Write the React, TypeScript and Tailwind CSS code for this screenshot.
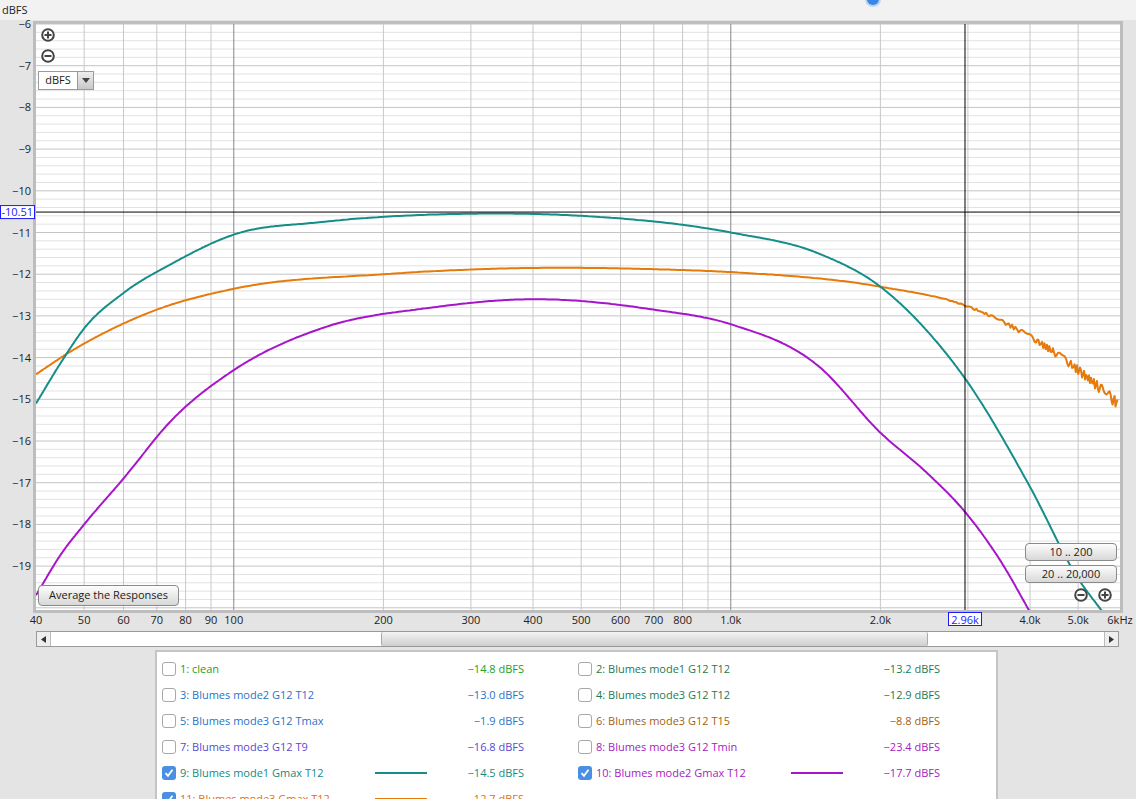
import React from "react";

// plot geometry
const L = 36;
const R = 1120;
const T = 24;
const B = 610;
const PX_PER_DEC = 497;
const PX_PER_DB = 41.7;

const fx = (f: number) => L + Math.log10(f / 40) * PX_PER_DEC;
const dy = (db: number) => T + (-6 - db) * PX_PER_DB;

type Pt = [number, number];

// cubic hermite through control points in log-f space (non-uniform tangents)
function curve(pts: Pt[], noise = (_f: number) => 0): string {
  const xs = pts.map((p) => Math.log10(p[0]));
  const ys = pts.map((p) => p[1]);
  const n = pts.length;
  const slope = (i: number) => (ys[i + 1] - ys[i]) / (xs[i + 1] - xs[i]);
  const m = xs.map((_, i) => {
    if (i === 0) return slope(0);
    if (i === n - 1) return slope(n - 2);
    const a = slope(i - 1);
    const b = slope(i);
    const ha = xs[i] - xs[i - 1];
    const hb = xs[i + 1] - xs[i];
    return (a * hb + b * ha) / (ha + hb);
  });
  const out: string[] = [];
  for (let i = 0; i < n - 1; i++) {
    const h = xs[i + 1] - xs[i];
    const steps = 40;
    for (let s = 0; s <= steps; s++) {
      const t = s / steps;
      const t2 = t * t;
      const t3 = t2 * t;
      const v =
        (2 * t3 - 3 * t2 + 1) * ys[i] +
        (t3 - 2 * t2 + t) * h * m[i] +
        (-2 * t3 + 3 * t2) * ys[i + 1] +
        (t3 - t2) * h * m[i + 1];
      const f = Math.pow(10, xs[i] + h * t);
      out.push(`${fx(f).toFixed(1)},${dy(v + noise(f)).toFixed(1)}`);
    }
  }
  return "M" + out.join(" L");
}

const teal = curve([
  [40, -15.1], [45, -14.1], [50, -13.3], [60, -12.45], [75, -11.75], [100, -11.05],
  [150, -10.75], [300, -10.55], [500, -10.6], [1000, -11.0], [1500, -11.5],
  [2000, -12.3], [2500, -13.4], [2960, -14.5], [4000, -17.1], [5000, -19.3], [5600, -20.1],
]);
const orange = curve(
  [
    [40, -14.4], [47, -13.85], [55, -13.4], [70, -12.85], [100, -12.35], [200, -12.0],
    [400, -11.85], [700, -11.88], [1000, -11.95], [2000, -12.3], [2960, -12.75],
    [4000, -13.5], [5000, -14.3], [6000, -15.1],
  ],
  (f) => (f > 2500 ? Math.sin(f * 1.7) * (f - 2500) / 25000 : 0)
);
const purple = curve([
  [40, -19.7], [45, -18.7], [50, -18.0], [60, -16.9], [75, -15.5], [100, -14.3],
  [150, -13.3], [250, -12.8], [400, -12.6], [700, -12.85], [1000, -13.2],
  [1500, -14.2], [2000, -15.8], [2500, -16.8], [2960, -17.7], [3500, -18.9], [4000, -20.1],
]);

const majorF = [100, 1000];
const minorF = [50, 60, 70, 80, 90, 200, 300, 400, 500, 600, 700, 800, 900, 2000, 3000, 4000, 5000];
const xLabels: [number, string][] = [
  [40, "40"], [50, "50"], [60, "60"], [70, "70"], [80, "80"], [90, "90"], [100, "100"],
  [200, "200"], [300, "300"], [400, "400"], [500, "500"], [600, "600"], [700, "700"],
  [800, "800"], [1000, "1.0k"], [2000, "2.0k"], [4000, "4.0k"], [5000, "5.0k"],
];

function Graph() {
  const hLines: React.ReactNode[] = [];
  for (let i = 0; i <= 70; i++) {
    const db = -6 - i * 0.2;
    const major = i % 5 === 0;
    hLines.push(
      <line key={i} x1={L} x2={R} y1={dy(db)} y2={dy(db)} stroke={major ? "#c4c4c4" : "#e2e2e2"} strokeWidth={1} />
    );
  }
  return (
    <svg width={1136} height={630} className="absolute left-0 top-0" style={{ fontFamily: "'Open Sans', 'Liberation Sans', sans-serif" }}>
      <rect x={L - 3} y={T - 3} width={R - L + 6} height={B - T + 6} fill="#bdbdbd" />
      <rect x={L} y={T} width={R - L} height={B - T} fill="#ffffff" />
      {hLines}
      {minorF.map((f) => (
        <line key={f} x1={fx(f)} x2={fx(f)} y1={T} y2={B} stroke="#c8c8c8" />
      ))}
      {majorF.map((f) => (
        <line key={f} x1={fx(f)} x2={fx(f)} y1={T} y2={B} stroke="#888" />
      ))}
      <defs>
        <clipPath id="plot">
          <rect x={L} y={T} width={R - L} height={B - T} />
        </clipPath>
      </defs>
      <g clipPath="url(#plot)" fill="none" strokeWidth={2} strokeLinejoin="round">
        <path d={purple} stroke="#a615c9" />
        <path d={orange} stroke="#e67a0a" />
        <path d={teal} stroke="#158d89" />
      </g>
      <line x1={L} x2={R} y1={dy(-10.51)} y2={dy(-10.51)} stroke="#000" />
      <line x1={fx(2960)} x2={fx(2960)} y1={T} y2={B} stroke="#000" />
      {/* y labels */}
      <text x={2} y={14} fontSize={11} fill="#222">dBFS</text>
      {Array.from({ length: 14 }, (_, i) => -6 - i).map((v) => (
        <text key={v} x={31} y={dy(v) + 4} fontSize={11} textAnchor="end" fill="#222">
          −{-v}
        </text>
      ))}
      <rect x={0.5} y={dy(-10.51) - 6.5} width={34} height={13} fill="#fff" stroke="#1a1aff" />
      <text x={33} y={dy(-10.51) + 4} fontSize={11} textAnchor="end" fill="#1a1aff">-10.51</text>
      {/* x labels */}
      {xLabels.map(([f, s]) => (
        <text key={f} x={fx(f)} y={624} fontSize={11} textAnchor="middle" fill="#222">{s}</text>
      ))}
      <text x={1120} y={624} fontSize={11} textAnchor="middle" fill="#222">6kHz</text>
      <rect x={fx(2960) - 16.5} y={612.5} width={33} height={13} fill="#fff" stroke="#1a1aff" />
      <text x={fx(2960)} y={624} fontSize={11} textAnchor="middle" fill="#1a1aff">2.96k</text>
    </svg>
  );
}

function ZoomIcon({ plus }: { plus?: boolean }) {
  return (
    <svg width={14} height={14} viewBox="0 0 14 14">
      <circle cx={7} cy={7} r={5.8} fill="#fff" stroke="#444" strokeWidth={2} />
      <rect x={3.5} y={6} width={7} height={2} fill="#444" />
      {plus && <rect x={6} y={3.5} width={2} height={7} fill="#444" />}
    </svg>
  );
}

const btn =
  "flex items-center justify-center rounded-[4px] border border-[#8a8a8a] bg-gradient-to-b from-[#fdfdfd] to-[#d8d8d8] text-[11px] text-[#222]";

type Row = { n: string; c: string; v: string; checked?: boolean; line?: string };
const rows: [Row, Row][] = [
  [{ n: "1: clean", c: "#22a022", v: "−14.8 dBFS" }, { n: "2: Blumes mode1 G12 T12", c: "#1e7a52", v: "−13.2 dBFS" }],
  [{ n: "3: Blumes mode2 G12 T12", c: "#2a72c8", v: "−13.0 dBFS" }, { n: "4: Blumes mode3 G12 T12", c: "#1e7a52", v: "−12.9 dBFS" }],
  [{ n: "5: Blumes mode3 G12 Tmax", c: "#2a72c8", v: "−1.9 dBFS" }, { n: "6: Blumes mode3 G12 T15", c: "#a8600f", v: "−8.8 dBFS" }],
  [{ n: "7: Blumes mode3 G12 T9", c: "#5a48d0", v: "−16.8 dBFS" }, { n: "8: Blumes mode3 G12 Tmin", c: "#a820c0", v: "−23.4 dBFS" }],
  [
    { n: "9: Blumes mode1 Gmax T12", c: "#168a80", v: "−14.5 dBFS", checked: true, line: "#158d89" },
    { n: "10: Blumes mode2 Gmax T12", c: "#a820c0", v: "−17.7 dBFS", checked: true, line: "#a615c9" },
  ],
  [{ n: "11: Blumes mode3 Gmax T12", c: "#e07010", v: "−12.7 dBFS", checked: true, line: "#e67a0a" }, { n: "", c: "", v: "" }],
];

function Cell({ r }: { r: Row }) {
  if (!r.n) return <div />;
  return (
    <div className="flex h-[26px] items-center">
      {r.checked ? (
        <div className="flex h-[14px] w-[14px] items-center justify-center rounded-[3px] bg-[#4a90e2]">
          <svg width={10} height={10} viewBox="0 0 10 10">
            <path d="M1.5 5.2 L4 7.8 L8.5 1.8" fill="none" stroke="#fff" strokeWidth={1.8} />
          </svg>
        </div>
      ) : (
        <div className="h-[14px] w-[14px] rounded-[3px] border border-[#a8a8a8] bg-white" />
      )}
      <span className="ml-[4px] w-[195px] whitespace-nowrap" style={{ color: r.c }}>{r.n}</span>
      <div className="flex w-[52px] justify-center">
        {r.line && <div className="h-[2px] w-[52px]" style={{ background: r.line }} />}
      </div>
      <span className="w-[97px] text-right" style={{ color: r.c }}>{r.v}</span>
    </div>
  );
}

export default function App() {
  return (
    <div
      className="relative h-[799px] w-[1136px] overflow-hidden bg-[#e4e4e4] text-[11px]"
      style={{ fontFamily: "'Open Sans', 'Liberation Sans', sans-serif" }}
    >
      <div className="absolute left-0 top-0 h-[20px] w-full bg-[#f2f2f2]" />
      <div className="absolute left-[867px] top-[-7px] h-[12px] w-[12px] rounded-full bg-[#3a86e6] ring-2 ring-[#b8d4f6]" />
      <Graph />

      {/* graph overlays */}
      <div className="absolute left-[41px] top-[28px] flex flex-col gap-[7px]">
        <ZoomIcon plus />
        <ZoomIcon />
      </div>
      <div className="absolute left-[38px] top-[71px] flex h-[19px] w-[56px] border border-[#9a9a9a] bg-white">
        <span className="flex flex-1 items-center justify-center text-[11px] text-[#222]">dBFS</span>
        <span className="flex w-[16px] items-center justify-center border-l border-[#9a9a9a] bg-gradient-to-b from-[#eee] to-[#c8c8c8]">
          <svg width={8} height={5}><path d="M0 0 H8 L4 5 Z" fill="#444" /></svg>
        </span>
      </div>
      <div className={`${btn} absolute left-[38px] top-[585px] h-[21px] w-[141px]`}>Average the Responses</div>
      <div className="absolute left-[1025px] top-[543px] flex flex-col gap-[4px]">
        <div className={`${btn} h-[18px] w-[92px]`}>10 .. 200</div>
        <div className={`${btn} h-[18px] w-[92px]`}>20 .. 20,000</div>
      </div>
      <div className="absolute left-[1074px] top-[588px] flex gap-[10px]">
        <ZoomIcon />
        <ZoomIcon plus />
      </div>

      {/* scrollbar */}
      <div className="absolute left-[36px] top-[631px] flex h-[16px] w-[1083px] border border-[#999] bg-white">
        <div className="flex w-[14px] items-center justify-center border-r border-[#bbb] bg-[#eee]">
          <svg width={5} height={7}><path d="M5 0 V7 L0 3.5 Z" fill="#333" /></svg>
        </div>
        <div className="ml-[330px] h-full w-[547px] rounded-[2px] border-x border-[#aaa] bg-gradient-to-b from-[#f4f4f4] to-[#cfcfcf]" />
        <div className="flex-1" />
        <div className="flex w-[14px] items-center justify-center border-l border-[#bbb] bg-[#eee]">
          <svg width={5} height={7}><path d="M0 0 V7 L5 3.5 Z" fill="#333" /></svg>
        </div>
      </div>

      {/* legend */}
      <div className="absolute left-[155px] top-[650px] h-[160px] w-[843px] border-2 border-[#c4c4c4] bg-white pl-[5px] pt-[4px]">
        {rows.map(([a, b], i) => (
          <div key={i} className="grid grid-cols-[416px_1fr]">
            <Cell r={a} />
            <Cell r={b} />
          </div>
        ))}
      </div>
    </div>
  );
}
